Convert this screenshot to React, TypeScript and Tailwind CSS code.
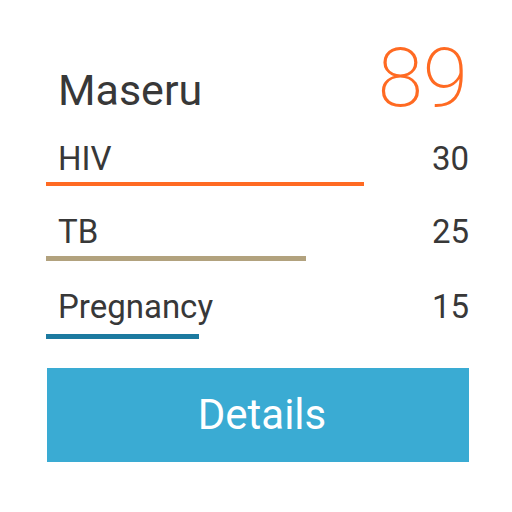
const rows = [
  { name: "HIV", value: 30, bar: "w-[318px] h-[4px] mt-[7px] bg-[#ff6a22]", gap: "mt-[23px]" },
  { name: "TB", value: 25, bar: "w-[260px] h-[5px] mt-[8px] bg-[#b2a27e]", gap: "mt-[29px]" },
  { name: "Pregnancy", value: 15, bar: "w-[153px] h-[5px] mt-[11px] bg-[#1c7aa0]", gap: "mt-[29px]" },
];

export default function App() {
  return (
    <div className="w-[512px] h-[512px] bg-white font-['Roboto',sans-serif] text-[#383838]">
      <div className="ml-[46px] w-[424px] pt-[37px]">
        <div className="flex justify-between items-start">
          <h1 className="mt-[32px] pl-[12px] text-[43px] leading-none font-normal">Maseru</h1>
          <span className="pr-[2px] text-[82px] leading-none font-extralight not-italic text-[#ff6a22]">89</span>
        </div>

        {rows.map((row) => (
          <div key={row.name} className={row.gap}>
            <div className="flex justify-between pl-[12px] pr-[1px] text-[33px] leading-none">
              <span>{row.name}</span>
              <span>{row.value}</span>
            </div>
            <div className={row.bar} />
          </div>
        ))}

        <button className="mt-[29px] ml-[1px] w-[422px] h-[94px] pl-[8px] bg-[#3aabd3] text-white text-[42px] leading-none flex items-center justify-center">
          Details
        </button>
      </div>
    </div>
  );
}
